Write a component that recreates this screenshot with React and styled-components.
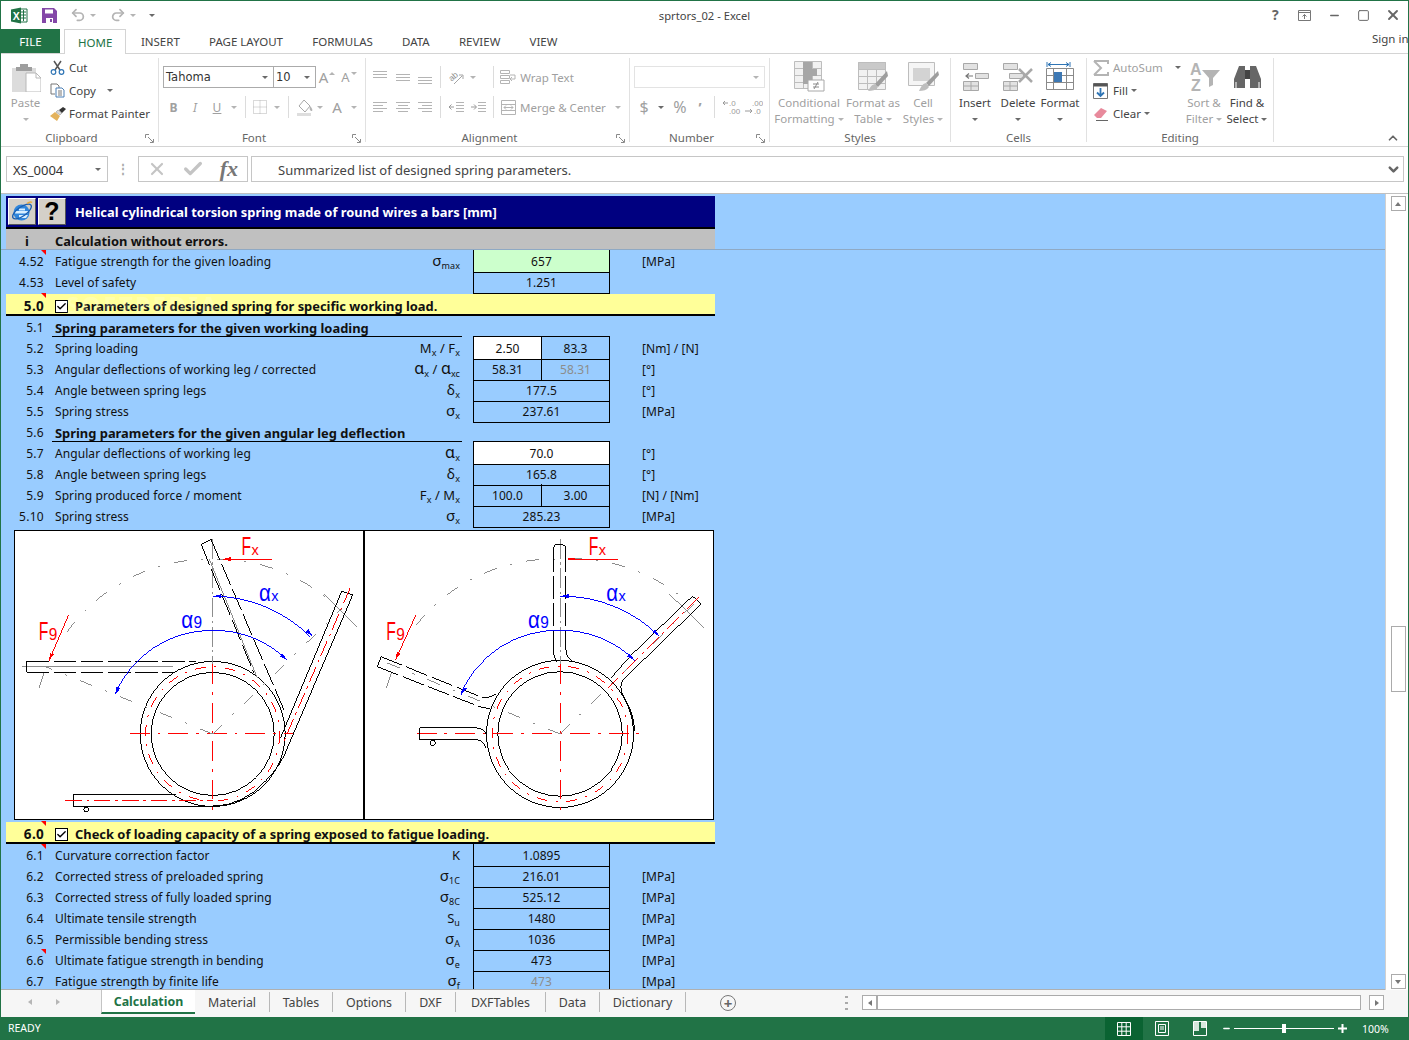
import React from 'react';
import styled, { createGlobalStyle } from 'styled-components';
import { Undo2, Redo2, Minus, Square, X, ChevronUp, ChevronDown, Check } from 'lucide-react';

const GlobalStyle = createGlobalStyle`
  html, body { margin: 0; padding: 0; background: #fff; overflow: hidden; }
  * { box-sizing: border-box; }
`;

const UI = '"Noto Sans", "Open Sans", sans-serif';
const GRID = '"Noto Sans", "DejaVu Sans", sans-serif';
const GREEN = '#217346';
const OFF = '#b4b4b4';

/* ---------- window frame ---------- */
const Win = styled.div`
  width: 1409px;
  height: 1040px;
  display: flex;
  flex-direction: column;
  border: 1px solid ${GREEN};
  border-bottom: 0;
  font-family: ${UI};
  font-size: 11.5px;
  color: #444;
  overflow: hidden;
`;
const TitleBar = styled.div`
  height: 28px;
  flex: none;
  display: grid;
  grid-template-columns: 1fr auto 1fr;
  align-items: center;
`;
const Qat = styled.div`
  display: flex;
  align-items: center;
  padding-left: 10px;
`;
const QatSlot = styled.span`
  width: ${p => p.$w}px;
  display: flex;
  align-items: center;
`;
const TitleText = styled.div`
  color: #444;
  font-size: 11.2px;
`;
const WinButtons = styled.div`
  display: flex;
  justify-content: flex-end;
  align-items: center;
  color: #666;
`;
const WinBtn = styled.span`
  width: 29.5px;
  display: flex;
  justify-content: center;
  font-weight: ${p => (p.$bold ? 700 : 400)};
  font-size: 14px;
  line-height: 14px;
`;

/* ---------- tabs ---------- */
const TabStrip = styled.div`
  height: 25px;
  flex: none;
  display: flex;
  align-items: stretch;
  border-bottom: 1px solid #d4d4d4;
`;
const FileTab = styled.div`
  width: 59px;
  height: 24px;
  background: ${GREEN};
  color: #fff;
  display: flex;
  align-items: center;
  justify-content: center;
  margin-right: 4px;
`;
const Tab = styled.div`
  height: ${p => (p.$on ? '25px' : '24px')};
  padding: 0 ${p => (p.$on ? 13 : 14.6)}px;
  display: flex;
  align-items: center;
  white-space: nowrap;
  color: ${p => (p.$on ? GREEN : '#444')};
  background: #fff;
  border: ${p => (p.$on ? '1px solid #d4d4d4' : '0')};
  border-bottom: 0;
`;
const SignIn = styled.div`
  margin-left: auto;
  width: 36px;
  overflow: hidden;
  white-space: nowrap;
  line-height: 20px;
`;

/* ---------- ribbon ---------- */
const Ribbon = styled.div`
  height: 93px;
  flex: none;
  display: flex;
  position: relative;
  border-bottom: 1px solid #d4d4d4;
`;
const Group = styled.section`
  width: ${p => p.$w}px;
  height: 84px;
  margin-top: 4px;
  border-right: 1px solid #e1e1e1;
  display: flex;
  flex-direction: column;
  position: relative;
`;
const GroupBody = styled.div`
  height: 72px;
  flex: none;
  display: flex;
  padding-left: ${p => p.$pl || 0}px;
  flex-direction: ${p => (p.$col ? 'column' : 'row')};
`;
const GroupLabel = styled.div`
  height: 16px;
  flex: none;
  line-height: 16px;
  text-align: center;
  padding-right: ${p => (p.$launch ? 16 : 0)}px;
  font-size: 11.5px;
  color: #666;
`;
const Launcher = styled.svg`
  position: absolute;
  right: 4px;
  bottom: -1px;
  width: 9px;
  height: 9px;
`;
const Big = styled.div`
  width: ${p => p.$w}px;
  flex: none;
  display: flex;
  flex-direction: column;
  align-items: center;
  color: ${p => (p.$off ? '#a0a0a0' : '#444')};
`;
const BigIcon = styled.div`
  height: 37px;
  display: flex;
  align-items: center;
  justify-content: center;
`;
const BigLine = styled.div`
  height: 16px;
  line-height: 16px;
  white-space: nowrap;
  display: flex;
  align-items: center;
  gap: 3px;
`;
const SmallCol = styled.div`
  width: ${p => p.$w}px;
  flex: none;
  margin-top: -2px;
`;
const SmallRow = styled.div`
  height: 23px;
  display: flex;
  align-items: center;
  white-space: nowrap;
  color: ${p => (p.$off ? '#a0a0a0' : '#444')};
`;
const SmallIcon = styled.span`
  width: ${p => p.$w || 19}px;
  flex: none;
  display: flex;
  align-items: center;
`;
const Caret = styled.i`
  display: inline-block;
  width: 0;
  height: 0;
  border-left: 3px solid transparent;
  border-right: 3px solid transparent;
  border-top: 3px solid ${p => (p.$off ? OFF : '#6a6a6a')};
  margin-left: ${p => p.$ml || 0}px;
`;
const SizeMark = styled.i`
  width: 0;
  height: 0;
  margin: -8px 0 0 1px;
  border-left: 3px solid transparent;
  border-right: 3px solid transparent;
  ${p => (p.$down ? `border-top: 3px solid ${OFF};` : `border-bottom: 3px solid ${OFF};`)}
`;
const ToolRow = styled.div`
  height: 22px;
  display: flex;
  align-items: center;
  margin-top: ${p => p.$mt || 0}px;
`;
const Tool = styled.span`
  width: ${p => p.$w}px;
  flex: none;
  height: 22px;
  display: flex;
  align-items: center;
  justify-content: center;
  color: #a0a0a0;
  font-weight: ${p => (p.$b ? 700 : 400)};
  font-style: ${p => (p.$i ? 'italic' : 'normal')};
  text-decoration: ${p => (p.$u ? 'underline' : 'none')};
  font-size: ${p => p.$fs || 11.5}px;
  white-space: nowrap;
`;
const Sep = styled.span`
  width: ${p => p.$w}px;
  flex: none;
  height: 22px;
  display: flex;
  justify-content: center;
  &::after {
    content: '';
    width: 1px;
    background: #dcdcdc;
  }
`;
const Combo = styled.div`
  width: ${p => p.$w}px;
  height: 22px;
  flex: none;
  border: 1px solid ${p => (p.$off ? '#e3e3e3' : '#ababab')};
  margin-left: ${p => p.$ml || 0}px;
  background: #fff;
  display: flex;
  align-items: center;
  justify-content: space-between;
  padding: 0 5px 0 2px;
  color: #333;
  font-family: "DejaVu Sans", sans-serif;
  font-size: 11.5px;
`;
const Collapse = styled.span`
  position: absolute;
  right: 8px;
  bottom: 1px;
  color: #666;
  display: flex;
`;

/* ---------- formula bar ---------- */
const FormulaBar = styled.div`
  height: 46px;
  flex: none;
  display: flex;
  align-items: center;
  padding: 0 4px 3px 5px;
`;
const NameBox = styled.div`
  width: 102px;
  height: 26px;
  border: 1px solid #c6c6c6;
  display: flex;
  align-items: center;
  justify-content: space-between;
  padding: 2px 6px 0;
  color: #333;
  font-size: 13px;
`;
const Grip = styled.span`
  width: 30px;
  text-align: center;
  color: #aaa;
  font-weight: 700;
  line-height: 10px;
  font-size: 12px;
`;
const FxBox = styled.div`
  width: 110px;
  height: 26px;
  border: 1px solid #c6c6c6;
  display: flex;
  align-items: center;
  justify-content: space-between;
  padding: 0 9px 0 8px;
  margin-right: 3px;
`;
const FxText = styled.span`
  font-family: "Liberation Serif", serif;
  font-style: italic;
  font-weight: 700;
  font-size: 22px;
  color: #777;
  line-height: 20px;
`;
const FormulaInput = styled.div`
  flex: 1;
  height: 26px;
  border: 1px solid #c6c6c6;
  display: flex;
  align-items: center;
  justify-content: space-between;
  padding: 2px 2px 0 26px;
  color: #444;
  font-size: 13px;
`;

/* ---------- sheet ---------- */
const SheetArea = styled.div`
  height: 797px;
  flex: none;
  display: flex;
  border-top: 1px solid #c0c0c0;
`;
const Sheet = styled.div`
  flex: 1;
  background: #99ccff;
  overflow: hidden;
  padding-top: 2px;
  font-family: ${GRID};
  font-size: 12px;
  letter-spacing: 0.07px;
  color: #111;
  position: relative;
  border-bottom: 1px solid #b0b0b0;
`;
const Block = styled.div`
  width: 709px;
  margin-left: 5px;
`;
const Navy = styled(Block)`
  height: 33px;
  background: #000080;
  border-bottom: 2px solid #000;
  color: #fff;
  font-weight: 700;
  font-size: 12.9px;
  letter-spacing: 0;
  display: flex;
  align-items: center;
  padding-left: 2px;
`;
const BevelBtn = styled.span`
  width: 28px;
  height: 27px;
  margin-right: 2px;
  background: #d4d0c8;
  border: 1px solid;
  border-color: #fff #555 #555 #fff;
  color: #000;
  display: flex;
  align-items: center;
  justify-content: center;
  font-size: 25px;
  font-weight: 700;
  font-family: "Liberation Sans", sans-serif;
`;
const NavyTitle = styled.span`
  margin-left: 7px;
`;
const FreezeLine = styled.div`
  border-bottom: 1px solid #8fa9c4;
`;
const StatusRow = styled(Block)`
  height: 20px;
  background: #c0c0c0;
  display: flex;
  align-items: center;
  font-weight: 700;
  padding-top: 4px;
  font-size: 12.9px;
  letter-spacing: 0;
`;
const IMark = styled.span`
  width: 42px;
  text-align: center;
  margin-right: 7px;
`;
const Row = styled(Block)`
  height: 21px;
  display: grid;
  grid-template-columns: 39px 10px 405px 13px 137px 32px 1fr;
  align-items: stretch;
`;
const Num = styled.div`
  grid-column: 1;
  text-align: right;
  padding-right: 1px;
  letter-spacing: 0.3px;
  line-height: 23px;
  position: relative;
  &::after {
    content: '';
    display: ${p => (p.$mark ? 'block' : 'none')};
    position: absolute;
    right: -1px;
    top: 0;
    border-top: 5px solid #f00;
    border-left: 5px solid transparent;
  }
`;
const Label = styled.div`
  grid-column: 3;
  display: flex;
  justify-content: space-between;
  line-height: 23px;
  height: 21px;
  white-space: nowrap;
`;
const SectionLabel = styled.div`
  grid-column: 2 / 5;
  margin-left: 7px;
  margin-right: 11px;
  padding-left: 3px;
  font-weight: 700;
  font-size: 12.9px;
  letter-spacing: 0;
  line-height: 24px;
  height: 21px;
  border-bottom: 1px solid #000;
  white-space: nowrap;
  overflow: hidden;
`;
const Symbol = styled.span`
  font-size: 13px;
`;
const Greek = styled.span`
  font-size: ${p => p.$fs}px;
  line-height: 1;
`;
const Sub = styled.sub`
  font-size: 9px;
  vertical-align: -3px;
  line-height: 0;
`;
const Values = styled.div`
  grid-column: 5;
  display: flex;
  border: 1px solid #000;
  border-top: ${p => (p.$top ? '1px solid #000' : '0')};
  margin-top: ${p => (p.$top ? '-1px' : '0')};
`;
const Val = styled.div`
  flex: 1;
  text-align: center;
  padding-top: 4px;
  line-height: 16px;
  background: ${p => p.$bg || 'transparent'};
  color: ${p => (p.$dim ? '#8c8c8c' : '#111')};
  & + & {
    border-left: 1px solid #000;
  }
`;
const Unit = styled.div`
  grid-column: 7;
  line-height: 23px;
`;
const YellowRow = styled(Block)`
  height: 22px;
  margin-top: 2px;
  background: #ffff99;
  border-bottom: 2px solid #000;
  display: flex;
  align-items: center;
  font-weight: 700;
  font-size: 12.9px;
  letter-spacing: 0;
  padding-top: 4px;
  position: relative;
`;
const YellowNum = styled(Num)`
  width: 39px;
  flex: none;
  font-size: 13.5px;
  line-height: 18px;
  &::after {
    top: -4px;
  }
`;
const CheckBox = styled.span`
  width: 13px;
  height: 13px;
  margin-left: 10px;
  margin-right: 7px;
  border: 1px solid #000;
  background: #fff;
  display: flex;
  align-items: center;
  justify-content: center;
`;
const Watermark = styled.span`
  position: absolute;
  left: 60px;
  top: -6px;
  font-size: 24px;
  font-weight: 700;
  letter-spacing: 2.5px;
  color: rgba(255, 255, 255, 0.2);
  pointer-events: none;
`;
const Pictures = styled.div`
  width: 700px;
  height: 290px;
  margin: 4px 0 0 13px;
  border: 1px solid #000;
  display: flex;
  background: #fff;
`;
const Picture = styled.div`
  flex: 1;
  display: flex;
  & + & {
    border-left: 2px solid #000;
  }
  svg {
    display: block;
    width: 100%;
    height: 100%;
  }
`;

/* ---------- scroll bars ---------- */
const VScroll = styled.div`
  width: 23px;
  flex: none;
  background: #fff;
  display: flex;
  flex-direction: column;
  align-items: center;
  padding: 2px 0 1px 2px;
  border-left: 1px solid #d0d0d0;
`;
const ScrollBtn = styled.div`
  width: 15px;
  height: 15px;
  flex: none;
  border: 1px solid #ababab;
  background: #fff;
  display: flex;
  align-items: center;
  justify-content: center;
`;
const VTrack = styled.div`
  flex: 1;
  padding-top: 415px;
`;
const VThumb = styled.div`
  width: 15px;
  height: 66px;
  border: 1px solid #ababab;
  background: #fff;
`;
const Tri = styled.i`
  width: 0;
  height: 0;
  display: block;
  ${p => p.$dir === 'up' && 'border-left:3px solid transparent;border-right:3px solid transparent;border-bottom:4px solid #777;'}
  ${p => p.$dir === 'down' && 'border-left:3px solid transparent;border-right:3px solid transparent;border-top:4px solid #777;'}
  ${p => p.$dir === 'left' && 'border-top:3px solid transparent;border-bottom:3px solid transparent;border-right:4px solid #777;'}
  ${p => p.$dir === 'right' && 'border-top:3px solid transparent;border-bottom:3px solid transparent;border-left:4px solid #777;'}
`;

/* ---------- sheet tabs ---------- */
const SheetTabs = styled.div`
  height: 27px;
  flex: none;
  display: flex;
  align-items: flex-start;
  background: #f6f6f6;
  font-size: 12.4px;
  color: #444;
`;
const NavArrows = styled.div`
  width: 100px;
  height: 24px;
  flex: none;
  display: flex;
  align-items: center;
  padding-left: 27px;
  gap: 24px;
  opacity: 0.5;
`;
const SheetTab = styled.div`
  width: ${p => p.$w}px;
  height: ${p => (p.$on ? 24 : 20)}px;
  margin-top: ${p => (p.$on ? 0 : 2)}px;
  flex: none;
  display: flex;
  align-items: center;
  justify-content: center;
  background: ${p => (p.$on ? '#fff' : 'transparent')};
  color: ${p => (p.$on ? GREEN : '#444')};
  font-weight: ${p => (p.$on ? 700 : 400)};
  border-right: ${p => (p.$on ? '0' : '1px solid #b8b8b8')};
  border-bottom: ${p => (p.$on ? `2px solid ${GREEN}` : '0')};
  border-left: ${p => (p.$on ? '1px solid #c4c4c4' : '0')};
`;
const AddSheet = styled.div`
  width: 16px;
  height: 16px;
  margin: 5px 0 0 34px;
  border: 1px solid #777;
  border-radius: 50%;
  color: #666;
  flex: none;
  display: flex;
  align-items: center;
  justify-content: center;
  font-size: 15px;
  font-weight: 700;
  line-height: 14px;
`;
const DotsV = styled.div`
  margin: 6px 0 0 109px;
  width: 3px;
  flex: none;
  height: 14px;
  background: repeating-linear-gradient(#aaa 0 2px, transparent 2px 6px);
`;
const HScroll = styled.div`
  display: flex;
  margin: 5px 0 0 14px;
`;
const HBtn = styled.div`
  width: 15px;
  height: 15px;
  border: 1px solid #ababab;
  background: #fff;
  display: flex;
  align-items: center;
  justify-content: center;
`;
const HTrack = styled.div`
  width: 484px;
  height: 15px;
  margin-right: 8px;
  background: #fff;
  border: 1px solid #ababab;
`;

/* ---------- status bar ---------- */
const StatusBar = styled.div`
  height: 23px;
  flex: none;
  margin: 0 -1px;
  background: ${GREEN};
  color: #fff;
  display: flex;
  align-items: center;
  font-size: 10.5px;
  padding: 0 20px 0 8px;
`;
const ReadyText = styled.span`
  margin-right: auto;
  padding-bottom: 1px;
`;
const ViewBtn = styled.div`
  width: 38px;
  height: 23px;
  flex: none;
  display: flex;
  align-items: center;
  justify-content: center;
  background: ${p => (p.$on ? '#0a6332' : 'transparent')};
`;
const Zoom = styled.div`
  display: flex;
  align-items: center;
  margin-left: 3px;
  gap: 3px;
`;
const ZoomTrack = styled.div`
  width: 100px;
  height: 1px;
  background: #fff;
  position: relative;
  margin-right: 1px;
  &::after {
    content: '';
    position: absolute;
    left: 48px;
    top: -4px;
    width: 4px;
    height: 9px;
    background: #fff;
  }
`;
const ZoomPct = styled.span`
  margin-left: 15px;
  width: 27px;
  white-space: nowrap;
`;

/* ---------- icons ---------- */
const Svg = ({ w = 16, h = 16, children }) => (
  <svg width={w} height={h} viewBox={`0 0 ${w} ${h}`} fill="none">{children}</svg>
);

const ExcelLogo = () => (
  <Svg w={17} h={17}>
    <path d="M9 2h7v13H9z" fill="#fff" stroke="#217346" />
    <path d="M10 5h5M10 8h5M10 11h5M12.500 3v11" stroke="#217346" />
    <path d="M0 2.500 10 .5v16L0 14.500z" fill="#217346" />
    <text x="1.800" y="12.500" fontSize="10.500" fontWeight="700" fill="#fff" fontFamily="Liberation Sans">X</text>
  </Svg>
);
const SaveIcon = () => (
  <Svg w={15} h={15}>
    <path d="M0 0h12l3 3v12H0z" fill="#8447a8" />
    <path d="M3 1.500h8v4H3z" fill="#fff" />
    <path d="M4 10h7v5H4z" fill="#fff" />
    <path d="M8 11h2v3H8z" fill="#8447a8" />
  </Svg>
);
const PasteIcon = () => (
  <Svg w={30} h={30}>
    <path d="M1 6h24v24H1z" fill="#dcdcdc" />
    <path d="M9 2h8v3h4v4H5V5h4z" fill="#9e9e9e" />
    <path d="M15 11h10l5 5v14H15z" fill="#fff" stroke="#b8b8b8" />
    <path d="M25 11v5h5" stroke="#b8b8b8" />
  </Svg>
);
const CutIcon = () => (
  <Svg w={15} h={15}>
    <path d="M4 1l6 9M11 1 5 10" stroke="#555" strokeWidth="1.500" />
    <circle cx="3.500" cy="12" r="2.300" stroke="#2f75b5" strokeWidth="1.200" />
    <circle cx="11.500" cy="12" r="2.300" stroke="#2f75b5" strokeWidth="1.200" />
  </Svg>
);
const CopyIcon = () => (
  <Svg w={15} h={15}>
    <path d="M1 1h6l2 2v3M1 1v10h4" stroke="#777" />
    <path d="M6 5h6l2 2v7H6z" fill="#fff" stroke="#4a7fb5" />
    <path d="M8 8h4M8 10h4M8 12h4" stroke="#777" />
  </Svg>
);
const BrushIcon = () => (
  <Svg w={16} h={14}>
    <path d="M0 9l5-4 5 4-3 5z" fill="#e3b25c" />
    <path d="M6 5l4 3 2-2-4-3z" fill="#d9d9d9" stroke="#888" strokeWidth=".5" />
    <path d="M9 3l4-3 3 2-4 4z" fill="#333" />
  </Svg>
);
const Launch = () => (
  <Launcher viewBox="0 0 9 9" fill="none">
    <path d="M.5 4V.5H4M3 3l5 5M8.500 5v3.500H5" stroke="#8a8a8a" />
  </Launcher>
);
const Lines = ({ rows, color = OFF }) => (
  <Svg w={16} h={14}>
    {rows.map(([x1, x2, y], i) => (
      <path key={i} d={`M${x1} ${y}.5H${x2}`} stroke={color} />
    ))}
  </Svg>
);
const TopAlign = () => <Lines rows={[[1, 15, 1], [1, 15, 4], [1, 15, 7]]} />;
const MidAlign = () => <Lines rows={[[1, 15, 4], [1, 15, 7], [1, 15, 10]]} />;
const BotAlign = () => <Lines rows={[[1, 15, 7], [1, 15, 10], [1, 15, 13]]} />;
const LeftAlign = () => <Lines rows={[[1, 15, 2], [1, 11, 5], [1, 15, 8], [1, 11, 11]]} />;
const CenterAlign = () => <Lines rows={[[1, 15, 2], [3, 13, 5], [1, 15, 8], [3, 13, 11]]} />;
const RightAlign = () => <Lines rows={[[1, 15, 2], [5, 15, 5], [1, 15, 8], [5, 15, 11]]} />;
const Indent = ({ flip }) => (
  <Svg w={16} h={14}>
    <path d="M8 2.500h8M8 5.500h8M8 8.500h8M8 11.500h8" stroke={OFF} />
    <path d={flip ? 'M1 7h5M4 4.500 6.500 7 4 9.500' : 'M1 7h5M3.500 4.500 1 7l2.500 2.500'} stroke="#999" />
  </Svg>
);
const Borders = () => (
  <Svg w={14} h={14}>
    <path d="M.5.500h13v13H.5zM7 .5v13M.5 7h13" stroke={OFF} strokeDasharray="1 1" />
  </Svg>
);
const FillIcon = () => (
  <Svg w={18} h={17}>
    <path d="M8 1l6 6-5 6-6-6z" stroke="#a8a8a8" fill="#fff" />
    <path d="M14 7c2 2 3 4 2 5-2 0-3-2-2-5z" fill="#b4b4b4" />
    <path d="M1 14h14v3H1z" fill="#dedede" />
  </Svg>
);
const Orient = () => (
  <Svg w={20} h={18}>
    <text x="2" y="11" fontSize="8.500" fill="#8f8f8f" transform="rotate(-40 7 9)" fontFamily="Liberation Sans">ab</text>
    <path d="M7 16l8-8M12 7h4v4" stroke="#a4a4a4" />
  </Svg>
);
const WrapIcon = () => (
  <Svg w={16} h={15}>
    <path d="M.5.500h9v3h-9zM.5 5.500h9v3h-9zM.5 10.500h9v3h-9z" stroke={OFF} />
    <path d="M10 5h5v4h-5M12 7l-2 2 2 2" stroke={OFF} />
  </Svg>
);
const MergeIcon = () => (
  <Svg w={15} h={15}>
    <path d="M.5.500h14v14H.5zM.5 4.500h14M.5 10.500h14M3 7.500h9M5 5.500l-2 2 2 2M10 5.500l2 2-2 2" stroke={OFF} />
  </Svg>
);
const DecInc = ({ flip }) => (
  <Svg w={19} h={16}>
    <text x={flip ? 8 : 7} y="7" fontSize="8" fill="#9a9a9a" fontFamily="Liberation Sans">{flip ? '.00' : '.0'}</text>
    <text x={flip ? 10 : 7} y="15" fontSize="8" fill="#9a9a9a" fontFamily="Liberation Sans">{flip ? '.0' : '.00'}</text>
    <path d={flip ? 'M1 12h7M6 10l2 2-2 2' : 'M1 4h5M3 2 1 4l2 2'} stroke="#9a9a9a" />
  </Svg>
);
const Sheet3 = ({ extra }) => (
  <g stroke="#bdbdbd">
    <path d="M.5.500h27v27H.5z" fill="#f1f1f1" />
    <path d="M9.500.500v27M18.500.500v27M.5 7.500h27M.5 14.500h27M.5 21.500h27" />
    {extra}
  </g>
);
const CondFormat = () => (
  <Svg w={31} h={31}>
    <Sheet3 extra={<path d="M9 1h9v7h5v7h-5v8H9z" fill="#a6a6a6" stroke="none" />} />
    <path d="M14 19h16v11H14z" fill="#fff" stroke="#a8a8a8" />
    <path d="M19 23h6M19 26h6M24 21l-4 7" stroke="#8a8a8a" />
  </Svg>
);
const TableFormat = () => (
  <Svg w={31} h={30}>
    <Sheet3 extra={<path d="M.5.500h27v7H.5z" fill="#c9c9c9" />} />
    <path d="M29 9 17 22l3 3L30 14z" fill="#9e9e9e" />
    <path d="M17 22c-4 1-5 4-7 7 4 0 8-1 10-4z" fill="#bdbdbd" />
  </Svg>
);
const CellStyle = () => (
  <Svg w={31} h={30}>
    <path d="M.5.500h26v23H.5z" fill="#f5f5f5" stroke="#bdbdbd" />
    <path d="M5 6h17v13H5z" fill="#d3d3d3" />
    <path d="M30 9 18 21l3 3L31 13z" fill="#9e9e9e" />
    <path d="M18 21c-4 1-5 4-7 8 4 0 8-1 10-4z" fill="#bdbdbd" />
  </Svg>
);
const InsertCell = () => (
  <Svg w={27} h={28}>
    <g fill="#e2e2e2" stroke="#a8a8a8">
      <path d="M1.500.500h14v6h-14zM13.500 10.500h13v5h-13zM1.500 18.500h15v9h-15z" />
    </g>
    <path d="M1.500 23h15M9 18.500v9" stroke="#a8a8a8" />
    <path d="M4 13h7M7 10.500 4 13l3 2.500" stroke="#777" strokeWidth="1.200" />
  </Svg>
);
const DeleteCell = () => (
  <Svg w={30} h={28}>
    <g fill="#e2e2e2" stroke="#a8a8a8">
      <path d="M.5.500h14v6H.5zM6.500 10.500h14v5h-14zM.5 18.500h14v9H.5z" />
    </g>
    <path d="M.5 23h14M7 18.500v9" stroke="#a8a8a8" />
    <path d="M16 6l13 13M29 6 16 19" stroke="#a8a8a8" strokeWidth="2.500" />
  </Svg>
);
const FormatCell = () => (
  <Svg w={29} h={32}>
    <path d="M1 1v5M24 1v5M2 3.500h21M5 1.500l-3 2 3 2M20 1.500l3 2-3 2" stroke="#2f75b5" />
    <path d="M.5 7.500h27v21h-27zM7.500 7.500v21M20.500 7.500v21M.5 14.500h27M.5 21.500h27" stroke="#8a8a8a" />
    <path d="M8 11h8v10H8z" fill="#3d78b4" />
  </Svg>
);
const SumIcon = () => (
  <Svg w={16} h={16}>
    <path d="M1 1h14v3M1 15h14v-3M1 1l7 7-7 7" stroke={OFF} strokeWidth="2" />
  </Svg>
);
const FillDown = () => (
  <Svg w={15} h={16}>
    <path d="M.5.500h14v15H.5z" fill="#fff" stroke="#777" />
    <path d="M.5.500h14v3H.5z" fill="#555" />
    <path d="M7.500 5v8M4 9.500l3.500 3.500L11 9.500" stroke="#2f75b5" strokeWidth="1.800" />
  </Svg>
);
const Eraser = () => (
  <Svg w={16} h={14}>
    <path d="M1 8l7-7 6 3-6 7H4z" fill="#e88a9c" />
    <path d="M3 13.500h12" stroke="#666" />
  </Svg>
);
const SortIcon = () => (
  <Svg w={32} h={32}>
    <text x="2" y="14" fontSize="16" fontWeight="700" fill={OFF} fontFamily="Liberation Sans">A</text>
    <text x="3" y="30" fontSize="16" fontWeight="700" fill={OFF} fontFamily="Liberation Sans">Z</text>
    <path d="M14 9h18l-7 8v7l-4 2v-9z" fill={OFF} />
  </Svg>
);
const Binoculars = () => (
  <Svg w={27} h={26}>
    <path d="M0 15 5 2h6v22H0zM27 15 22 2h-6v22h11z" fill="#666" />
    <path d="M11 6h5v9h-5z" fill="#444" />
    <path d="M2 18v6M25 18v6" stroke="#fff" />
  </Svg>
);
const RibbonMode = () => (
  <Svg w={13} h={11}>
    <path d="M.5.500h12v10H.5zM.5 2.500h12" stroke="#777" />
    <path d="M6.500 9V4.500M4.500 6.500l2-2 2 2" stroke="#777" />
  </Svg>
);
const GridIcon = () => (
  <Svg w={14} h={14}>
    <path d="M.5.500h13v13H.5zM4.800.5v13M9.200.5v13M.5 4.800h13M.5 9.200h13" stroke="#fff" />
  </Svg>
);
const PageIcon = () => (
  <Svg w={14} h={15}>
    <path d="M.5.500h13v14H.5z" stroke="#fff" />
    <path d="M3.500 3.500h7v8h-7zM5 6h4M5 8h4" stroke="#fff" />
  </Svg>
);
const BreakIcon = () => (
  <Svg w={14} h={15}>
    <path d="M.5.500h13v14H.5z" stroke="#fff" />
    <path d="M1 1h5v9H1zM8 1h5v6H8z" fill="#d7e7dd" />
  </Svg>
);
const IeIcon = () => (
  <svg width="24" height="24" viewBox="0 0 24 24" fill="none">
    <circle cx="11.500" cy="12.500" r="8" fill="#2f86dc" />
    <path d="M5 11h13v2.500H5z" fill="#d9efff" />
    <path d="M9 8.500h6v2H9z" fill="#d9efff" />
    <path d="M9 15h9l-2 3H9z" fill="#d9efff" />
    <ellipse cx="12" cy="11.500" rx="11" ry="4.500" stroke="#1c5fb0" strokeWidth="1.300" transform="rotate(-35 12 11.500)" />
    <path d="M17 3.500c2-1.500 4-2 5-1" stroke="#e9a93a" strokeWidth="1.500" />
  </svg>
);

/* ---------- spring drawings, in 3x picture coordinates ---------- */
const COIL_DASH = '32 26 6 26';
const RED_DASH = '60 24 8 24';
const LEG_RED = '50 14 8 14';
const GRAY_DASH = '40 42 7 42';
const LEG_DASH = '68 14';

const Ink = styled.text`
  font-family: "Liberation Sans", sans-serif;
`;
const Letter = ({ x, y, base, sub, color }) => {
  const isF = base === 'F';
  const nine = sub === '9';
  return (
    <Ink x={x} y={y} fill={color}>
      <tspan fontSize={isF ? 78 : 74} textLength={isF ? 29 : 36} lengthAdjust="spacingAndGlyphs">{base}</tspan>
      <tspan x={x + (isF ? 30 : 37)} fontSize={nine ? 50 : 46} textLength={nine ? 26 : 22} lengthAdjust="spacingAndGlyphs">{sub}</tspan>
    </Ink>
  );
};
const Head = ({ at, dir, color }) => {
  const [x, y] = at;
  const a = (dir * Math.PI) / 180;
  const l = 24;
  const w = 6;
  const bx = x - Math.cos(a) * l;
  const by = y - Math.sin(a) * l;
  const nx = -Math.sin(a) * w;
  const ny = Math.cos(a) * w;
  return <polygon points={`${x},${y} ${bx + nx},${by + ny} ${bx - nx},${by - ny}`} fill={color} />;
};
const Common = ({ cx, ro, ri, left, right, children }) => (
  <g fill="none" strokeWidth="3">
    <circle cx={cx} cy="628" r={ro} stroke="#000" />
    <circle cx={cx} cy="628" r={ri} stroke="#000" />
    <circle cx={cx} cy="628" r={(ro + ri) / 2} stroke="#f00" strokeDasharray={COIL_DASH} />
    <path d={`M${cx} 418V864M${left} 628H${right}`} stroke="#f00" strokeDasharray={RED_DASH} />
    <path d={`M${cx} 40V418`} stroke="#8c8c8c" strokeDasharray="60 10 8 10" />
    {children}
  </g>
);

const SpringClosed = () => (
  <svg viewBox="15 15 1047 870" shapeRendering="crispEdges">
    <Common cx={610} ro={219} ri={186} left={360} right={855}>
      <path d="M170 320A530 530 0 0 1 610 100A530 530 0 0 1 975 235" stroke="#8c8c8c" strokeDasharray={GRAY_DASH} />
      <path d="M610 628 1000 250M610 628 105 425" stroke="#8c8c8c" strokeDasharray={GRAY_DASH} />
      <path d="M945 205 1045 305M100 445 85 490M35 425H490M600 100 745 460" stroke="#8c8c8c" />
      <path d="M48 408H560M48 442H490M575 55 735 445M605 40 825 555" stroke="#000" strokeDasharray={LEG_DASH} />
      <path d="M48 408V442M575 55 605 40" stroke="#000" />
      <path d="M1000 197 815 640M1000 197 1033 208 840 660Q820 720 770 770Q700 846 610 846L190 848V810H500" stroke="#000" />
      <path d="M1025 188 825 650M165 829H610" stroke="#f00" strokeDasharray={LEG_RED} />
      <path d="M610 212A416 416 0 0 1 905 335M315 508A317 317 0 0 1 610 315A317 317 0 0 1 835 405" stroke="#00f" />
      <path d="M790 100H640M175 268 115 408" stroke="#f00" />
      <circle cx="228" cy="856" r="7" stroke="#000" />
      <Head at={[612, 212]} dir={180} color="#00f" />
      <Head at={[912, 333]} dir={45} color="#00f" />
      <Head at={[835, 405]} dir={40} color="#00f" />
      <Head at={[315, 510]} dir={115} color="#00f" />
      <Head at={[640, 100]} dir={180} color="#f00" />
      <Head at={[115, 408]} dir={113} color="#f00" />
    </Common>
    <Letter x={697} y={87} base="F" sub="x" color="#f00" />
    <Letter x={750} y={227} base="α" sub="x" color="#00f" />
    <Letter x={515} y={307} base="α" sub="9" color="#00f" />
    <Letter x={85} y={345} base="F" sub="9" color="#f00" />
  </svg>
);

const SpringOpen = () => (
  <svg viewBox="8 15 1047 870" shapeRendering="crispEdges">
    <Common cx={595} ro={222} ri={188} left={162} right={840}>
      <path d="M160 300A530 530 0 0 1 595 100A530 530 0 0 1 975 225" stroke="#8c8c8c" strokeDasharray={GRAY_DASH} />
      <path d="M595 628 1020 215M595 628 40 400" stroke="#8c8c8c" strokeDasharray={GRAY_DASH} />
      <path d="M925 205 1030 308M70 490 85 445" stroke="#8c8c8c" />
      <path d="M575 70V315M613 70V315M55 395 360 518M43 425 350 545" stroke="#000" strokeDasharray={LEG_DASH} />
      <path d="M575 315V375Q575 395 585 410M613 315V375Q615 405 642 412M575 70Q575 55 590 55Q613 55 613 70M55 395 43 425M360 518Q380 520 402 508M350 545 382 552" stroke="#000" />
      <path d="M172 610H345Q365 612 372 628M172 645H345Q365 650 372 672M172 610Q170 628 172 645" stroke="#000" />
      <path d="M995 212 810 390 748 460M1022 235 785 465Q770 485 790 520Q820 570 820 620" stroke="#000" />
      <path d="M995 212 1022 235" stroke="#000" />
      <path d="M1015 215 740 490" stroke="#f00" strokeDasharray={LEG_RED} />
      <path d="M595 212A416 416 0 0 1 895 333M295 508A317 317 0 0 1 595 315A317 317 0 0 1 820 405" stroke="#00f" />
      <path d="M770 100H620M160 268 98 405" stroke="#f00" />
      <circle cx="210" cy="655" r="8" stroke="#000" />
      <Head at={[597, 212]} dir={180} color="#00f" />
      <Head at={[895, 333]} dir={45} color="#00f" />
      <Head at={[820, 405]} dir={40} color="#00f" />
      <Head at={[297, 510]} dir={115} color="#00f" />
      <path d="M620 97h20v6h-20z" fill="#f00" stroke="none" />
      <Head at={[98, 405]} dir={113} color="#f00" />
    </Common>
    <Letter x={682} y={87} base="F" sub="x" color="#f00" />
    <Letter x={735} y={227} base="α" sub="x" color="#00f" />
    <Letter x={498} y={309} base="α" sub="9" color="#00f" />
    <Letter x={70} y={343} base="F" sub="9" color="#f00" />
  </svg>
);

/* ---------- data ---------- */
const sym = (...parts) => parts;
const greekSize = { 'α': 16, 'σ': 15, 'δ': 14 };
const topRows = [
  { n: '4.52', t: 'Fatigue strength for the given loading', s: sym(['σ', 'max']), v: [{ x: '657', bg: '#ccffcc' }], u: '[MPa]', mark: true },
  { n: '4.53', t: 'Level of safety', v: [{ x: '1.251' }] },
];
const midRows = [
  { n: '5.1', section: 'Spring parameters for the given working loading' },
  { n: '5.2', t: 'Spring loading', s: sym(['M', 'x'], [' / '], ['F', 'x']), v: [{ x: '2.50', bg: '#fff' }, { x: '83.3' }], u: '[Nm] / [N]', top: true },
  { n: '5.3', t: 'Angular deflections of working leg / corrected', s: sym(['α', 'x'], [' / '], ['α', 'xc']), v: [{ x: '58.31' }, { x: '58.31', dim: true }], u: '[°]' },
  { n: '5.4', t: 'Angle between spring legs', s: sym(['δ', 'x']), v: [{ x: '177.5' }], u: '[°]' },
  { n: '5.5', t: 'Spring stress', s: sym(['σ', 'x']), v: [{ x: '237.61' }], u: '[MPa]' },
  { n: '5.6', section: 'Spring parameters for the given angular leg deflection' },
  { n: '5.7', t: 'Angular deflections of working leg', s: sym(['α', 'x']), v: [{ x: '70.0', bg: '#fff' }], u: '[°]', top: true },
  { n: '5.8', t: 'Angle between spring legs', s: sym(['δ', 'x']), v: [{ x: '165.8' }], u: '[°]' },
  { n: '5.9', t: 'Spring produced force / moment', s: sym(['F', 'x'], [' / '], ['M', 'x']), v: [{ x: '100.0' }, { x: '3.00' }], u: '[N] / [Nm]' },
  { n: '5.10', t: 'Spring stress', s: sym(['σ', 'x']), v: [{ x: '285.23' }], u: '[MPa]' },
];
const lowRows = [
  { n: '6.1', t: 'Curvature correction factor', s: sym(['K']), v: [{ x: '1.0895' }], top: true, mark: true },
  { n: '6.2', t: 'Corrected stress of preloaded spring', s: sym(['σ', '1C']), v: [{ x: '216.01' }], u: '[MPa]' },
  { n: '6.3', t: 'Corrected stress of fully loaded spring', s: sym(['σ', '8C']), v: [{ x: '525.12' }], u: '[MPa]' },
  { n: '6.4', t: 'Ultimate tensile strength', s: sym(['S', 'u']), v: [{ x: '1480' }], u: '[MPa]' },
  { n: '6.5', t: 'Permissible bending stress', s: sym(['σ', 'A']), v: [{ x: '1036' }], u: '[MPa]' },
  { n: '6.6', t: 'Ultimate fatigue strength in bending', s: sym(['σ', 'e']), v: [{ x: '473' }], u: '[MPa]', mark: true },
  { n: '6.7', t: 'Fatigue strength by finite life', s: sym(['σ', 'f']), v: [{ x: '473', dim: true }], u: '[Mpa]' },
];
const sheets = [
  ['Calculation', 94], ['Material', 75], ['Tables', 63], ['Options', 73],
  ['DXF', 50], ['DXFTables', 90], ['Data', 54], ['Dictionary', 86],
];

const DataRow = ({ r }) => {
  if (r.section) {
    return (
      <Row>
        <Num>{r.n}</Num>
        <SectionLabel>{r.section}</SectionLabel>
      </Row>
    );
  }
  return (
    <Row>
      <Num $mark={r.mark}>{r.n}</Num>
      <Label>
        <span>{r.t}</span>
        <Symbol>
          {(r.s || []).map(([b, s], i) => (
            <React.Fragment key={i}>
              {greekSize[b] ? <Greek $fs={greekSize[b]}>{b}</Greek> : b}
              {s && <Sub>{s}</Sub>}
            </React.Fragment>
          ))}
        </Symbol>
      </Label>
      <Values $top={r.top}>
        {r.v.map((c, i) => (
          <Val key={i} $bg={c.bg} $dim={c.dim}>{c.x}</Val>
        ))}
      </Values>
      {r.u && <Unit>{r.u}</Unit>}
    </Row>
  );
};

export default function App() {
  return (
    <>
      <GlobalStyle />
      <Win>
        <TitleBar>
          <Qat>
            <QatSlot $w={31}><ExcelLogo /></QatSlot>
            <QatSlot $w={28}><SaveIcon /></QatSlot>
            <QatSlot $w={20}><Undo2 size={16} color={OFF} strokeWidth={2.6} /></QatSlot>
            <QatSlot $w={20}><Caret $off /></QatSlot>
            <QatSlot $w={20}><Redo2 size={16} color={OFF} strokeWidth={2.6} /></QatSlot>
            <QatSlot $w={19}><Caret $off /></QatSlot>
            <QatSlot $w={10}><Caret /></QatSlot>
          </Qat>
          <TitleText>sprtors_02 - Excel</TitleText>
          <WinButtons>
            <WinBtn $bold>?</WinBtn>
            <WinBtn><RibbonMode /></WinBtn>
            <WinBtn><Minus size={13} strokeWidth={2.4} /></WinBtn>
            <WinBtn><Square size={13} strokeWidth={1.8} /></WinBtn>
            <WinBtn><X size={16} strokeWidth={2.8} /></WinBtn>
          </WinButtons>
        </TitleBar>

        <TabStrip>
          <FileTab>FILE</FileTab>
          <Tab $on>HOME</Tab>
          <Tab>INSERT</Tab>
          <Tab>PAGE LAYOUT</Tab>
          <Tab>FORMULAS</Tab>
          <Tab>DATA</Tab>
          <Tab>REVIEW</Tab>
          <Tab>VIEW</Tab>
          <SignIn>Sign in</SignIn>
        </TabStrip>

        <Ribbon>
          <Group $w={158}>
            <GroupBody>
              <Big $w={49} $off>
                <BigIcon><PasteIcon /></BigIcon>
                <BigLine>Paste</BigLine>
                <BigLine><Caret $off /></BigLine>
              </Big>
              <SmallCol $w={105}>
                <SmallRow><SmallIcon><CutIcon /></SmallIcon>Cut</SmallRow>
                <SmallRow><SmallIcon><CopyIcon /></SmallIcon>Copy<Caret $ml={11} /></SmallRow>
                <SmallRow><SmallIcon><BrushIcon /></SmallIcon>Format Painter</SmallRow>
              </SmallCol>
            </GroupBody>
            <GroupLabel $launch>Clipboard</GroupLabel>
            <Launch />
          </Group>

          <Group $w={207}>
            <GroupBody $col $pl={4}>
              <ToolRow $mt={8}>
                <Combo $w={111}>Tahoma<Caret /></Combo>
                <Combo $w={43} $ml={-1}>10<Caret /></Combo>
                <Tool $w={22} $fs={15}>A<SizeMark /></Tool>
                <Tool $w={22} $fs={13}>A<SizeMark $down /></Tool>
              </ToolRow>
              <ToolRow $mt={8}>
                <Tool $w={21} $b $fs={12}>B</Tool>
                <Tool $w={22} $i $fs={12}>I</Tool>
                <Tool $w={22} $u $fs={12}>U</Tool>
                <Tool $w={12}><Caret $off /></Tool>
                <Sep $w={10} />
                <Tool $w={20}><Borders /></Tool>
                <Tool $w={14}><Caret $off /></Tool>
                <Sep $w={9} />
                <Tool $w={24}><FillIcon /></Tool>
                <Tool $w={6}><Caret $off /></Tool>
                <Tool $w={28} $fs={15}>A</Tool>
                <Tool $w={6}><Caret $off /></Tool>
              </ToolRow>
            </GroupBody>
            <GroupLabel $launch>Font</GroupLabel>
            <Launch />
          </Group>

          <Group $w={264}>
            <GroupBody $col $pl={3}>
              <ToolRow $mt={8}>
                <Tool $w={22}><TopAlign /></Tool>
                <Tool $w={23}><MidAlign /></Tool>
                <Tool $w={22}><BotAlign /></Tool>
                <Sep $w={8} />
                <Tool $w={26}><Orient /></Tool>
                <Tool $w={6}><Caret $off /></Tool>
                <Tool $w={14} />
                <Sep $w={6} />
                <Tool $w={24}><WrapIcon /></Tool>
                <Tool $w={54}>Wrap Text</Tool>
              </ToolRow>
              <ToolRow $mt={8}>
                <Tool $w={22}><LeftAlign /></Tool>
                <Tool $w={23}><CenterAlign /></Tool>
                <Tool $w={22}><RightAlign /></Tool>
                <Sep $w={8} />
                <Tool $w={24}><Indent /></Tool>
                <Tool $w={20}><Indent flip /></Tool>
                <Tool $w={2} />
                <Sep $w={6} />
                <Tool $w={24}><MergeIcon /></Tool>
                <Tool $w={86}>Merge &amp; Center</Tool>
                <Tool $w={24}><Caret $off /></Tool>
              </ToolRow>
            </GroupBody>
            <GroupLabel $launch>Alignment</GroupLabel>
            <Launch />
          </Group>

          <Group $w={140}>
            <GroupBody $col $pl={4}>
              <ToolRow $mt={8}>
                <Combo $w={131} $off><span /><Caret $off /></Combo>
              </ToolRow>
              <ToolRow $mt={8}>
                <Tool $w={20} $fs={16}>$</Tool>
                <Tool $w={14}><Caret /></Tool>
                <Tool $w={24} $fs={16}>%</Tool>
                <Tool $w={16} $b $fs={14}>’</Tool>
                <Sep $w={12} />
                <Tool $w={22}><DecInc /></Tool>
                <Tool $w={22}><DecInc flip /></Tool>
              </ToolRow>
            </GroupBody>
            <GroupLabel $launch>Number</GroupLabel>
            <Launch />
          </Group>

          <Group $w={181}>
            <GroupBody $pl={1}>
              <Big $w={76} $off>
                <BigIcon><CondFormat /></BigIcon>
                <BigLine>Conditional</BigLine>
                <BigLine>Formatting<Caret $off /></BigLine>
              </Big>
              <Big $w={52} $off>
                <BigIcon><TableFormat /></BigIcon>
                <BigLine>Format as</BigLine>
                <BigLine>Table<Caret $off /></BigLine>
              </Big>
              <Big $w={48} $off>
                <BigIcon><CellStyle /></BigIcon>
                <BigLine>Cell</BigLine>
                <BigLine>Styles<Caret $off /></BigLine>
              </Big>
            </GroupBody>
            <GroupLabel>Styles</GroupLabel>
          </Group>

          <Group $w={136}>
            <GroupBody $pl={2}>
              <Big $w={44}>
                <BigIcon><InsertCell /></BigIcon>
                <BigLine>Insert</BigLine>
                <BigLine><Caret /></BigLine>
              </Big>
              <Big $w={42}>
                <BigIcon><DeleteCell /></BigIcon>
                <BigLine>Delete</BigLine>
                <BigLine><Caret /></BigLine>
              </Big>
              <Big $w={42}>
                <BigIcon><FormatCell /></BigIcon>
                <BigLine>Format</BigLine>
                <BigLine><Caret /></BigLine>
              </Big>
            </GroupBody>
            <GroupLabel>Cells</GroupLabel>
          </Group>

          <Group $w={187}>
            <GroupBody $pl={6}>
              <SmallCol $w={89}>
                <SmallRow $off><SmallIcon $w={20}><SumIcon /></SmallIcon>AutoSum<Caret $ml={12} /></SmallRow>
                <SmallRow><SmallIcon $w={20}><FillDown /></SmallIcon>Fill<Caret $ml={3} /></SmallRow>
                <SmallRow><SmallIcon $w={20}><Eraser /></SmallIcon>Clear<Caret $ml={3} /></SmallRow>
              </SmallCol>
              <Big $w={44} $off>
                <BigIcon><SortIcon /></BigIcon>
                <BigLine>Sort &amp;</BigLine>
                <BigLine>Filter<Caret $off /></BigLine>
              </Big>
              <Big $w={42}>
                <BigIcon><Binoculars /></BigIcon>
                <BigLine>Find &amp;</BigLine>
                <BigLine>Select<Caret /></BigLine>
              </Big>
            </GroupBody>
            <GroupLabel>Editing</GroupLabel>
          </Group>
          <Collapse><ChevronUp size={14} strokeWidth={3} /></Collapse>
        </Ribbon>

        <FormulaBar>
          <NameBox>XS_0004<Caret /></NameBox>
          <Grip>⋮</Grip>
          <FxBox>
            <X size={20} color="#c4c4c4" strokeWidth={2.6} />
            <Check size={22} color="#c4c4c4" strokeWidth={3.6} />
            <FxText>fx</FxText>
          </FxBox>
          <FormulaInput>
            Summarized list of designed spring parameters.
            <ChevronDown size={15} color="#666" strokeWidth={4} />
          </FormulaInput>
        </FormulaBar>

        <SheetArea>
          <Sheet>
            <Navy>
              <BevelBtn><IeIcon /></BevelBtn>
              <BevelBtn>?</BevelBtn>
              <NavyTitle>Helical cylindrical torsion spring made of round wires a bars [mm]</NavyTitle>
            </Navy>
            <FreezeLine>
              <StatusRow>
                <IMark>i</IMark>Calculation without errors.
              </StatusRow>
            </FreezeLine>
            {topRows.map(r => <DataRow key={r.n} r={r} />)}
            <YellowRow>
              <YellowNum $mark>5.0</YellowNum>
              <CheckBox><Check size={11} strokeWidth={3} color="#000" /></CheckBox>
              Parameters of designed spring for specific working load.
              <Watermark>SOFTPEDIA</Watermark>
            </YellowRow>
            {midRows.map(r => <DataRow key={r.n} r={r} />)}
            <Pictures>
              <Picture><SpringClosed /></Picture>
              <Picture><SpringOpen /></Picture>
            </Pictures>
            <YellowRow>
              <YellowNum $mark>6.0</YellowNum>
              <CheckBox><Check size={11} strokeWidth={3} color="#000" /></CheckBox>
              Check of loading capacity of a spring exposed to fatigue loading.
            </YellowRow>
            {lowRows.map(r => <DataRow key={r.n} r={r} />)}
          </Sheet>
          <VScroll>
            <ScrollBtn><Tri $dir="up" /></ScrollBtn>
            <VTrack><VThumb /></VTrack>
            <ScrollBtn><Tri $dir="down" /></ScrollBtn>
          </VScroll>
        </SheetArea>

        <SheetTabs>
          <NavArrows><Tri $dir="left" /><Tri $dir="right" /></NavArrows>
          {sheets.map(([name, w], i) => (
            <SheetTab key={name} $w={w} $on={i === 0}>{name}</SheetTab>
          ))}
          <AddSheet>+</AddSheet>
          <DotsV />
          <HScroll>
            <HBtn><Tri $dir="left" /></HBtn>
            <HTrack />
            <HBtn><Tri $dir="right" /></HBtn>
          </HScroll>
        </SheetTabs>

        <StatusBar>
          <ReadyText>READY</ReadyText>
          <ViewBtn $on><GridIcon /></ViewBtn>
          <ViewBtn><PageIcon /></ViewBtn>
          <ViewBtn><BreakIcon /></ViewBtn>
          <Zoom>
            <Minus size={9} strokeWidth={4} />
            <ZoomTrack />
            <svg width="9" height="9" viewBox="0 0 9 9"><path d="M4.500 0v9M0 4.500h9" stroke="#fff" strokeWidth="2" /></svg>
          </Zoom>
          <ZoomPct>100%</ZoomPct>
        </StatusBar>
      </Win>
    </>
  );
}
